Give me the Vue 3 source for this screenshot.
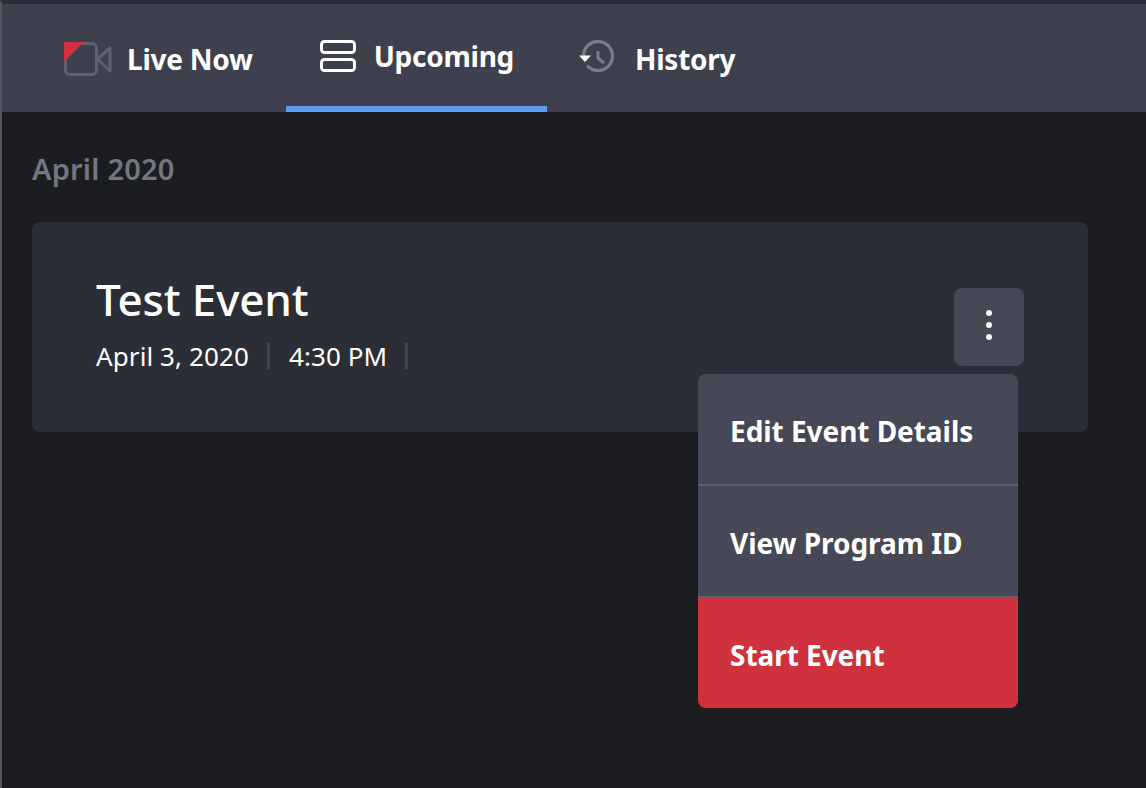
<template>
  <div class="page">
    <nav class="tabs">
      <a class="tab live">
        <svg class="tab-icon" width="48" height="34" viewBox="0 0 48 34" fill="none">
          <rect x="1.5" y="1.5" width="31" height="31" rx="4.5" stroke="#5f626e" stroke-width="3" />
          <path d="M33.5 17 L46 6 V29 Z" stroke="#5f626e" stroke-width="3" stroke-linejoin="round" />
          <path d="M0 0 H20 L0 20 Z" fill="#cf323c" />
        </svg>
        <span>Live Now</span>
      </a>
      <a class="tab active">
        <svg class="tab-icon" width="36" height="32" viewBox="0 0 36 32" fill="none">
          <rect x="1.5" y="1.5" width="33" height="11" rx="3" stroke="#fff" stroke-width="3" />
          <rect x="1.5" y="19.5" width="33" height="11" rx="3" stroke="#fff" stroke-width="3" />
        </svg>
        <span>Upcoming</span>
      </a>
      <a class="tab history">
        <svg class="tab-icon" width="36" height="32" viewBox="0 0 36 32" fill="none">
          <path d="M4.5 16 A14.5 14.5 0 1 1 9 26.5" stroke="#7b7d89" stroke-width="3.2" stroke-linecap="round" />
          <path d="M19 11 V18 L25 23" stroke="#7b7d89" stroke-width="3" stroke-linejoin="round" />
          <path d="M0 15.5 H12 L6 22 Z" fill="#fff" />
        </svg>
        <span>History</span>
      </a>
    </nav>

    <main class="content">
      <h2 class="month">{{ month }}</h2>
      <section class="event-card">
        <div class="event-info">
          <h1>{{ event.title }}</h1>
          <p class="meta">
            <span>{{ event.date }}</span>
            <i class="sep"></i>
            <span>{{ event.time }}</span>
            <i class="sep"></i>
          </p>
        </div>
        <button class="more" aria-label="More">
          <b></b><b></b><b></b>
        </button>
        <ul class="menu">
          <li v-for="item in menuItems" :key="item.label" :class="{ danger: item.danger }">
            {{ item.label }}
          </li>
        </ul>
      </section>
    </main>
  </div>
</template>

<script setup>
const month = 'April 2020'
const event = {
  title: 'Test Event',
  date: 'April 3, 2020',
  time: '4:30 PM'
}
const menuItems = [
  { label: 'Edit Event Details' },
  { label: 'View Program ID' },
  { label: 'Start Event', danger: true }
]
</script>

<style>
html,
body {
  background: #1c1d21;
}
</style>

<style scoped>
.page {
  height: 788px;
  box-sizing: border-box;
  border-left: 2px solid #55575f;
  border-top: 4px solid #2c2e36;
  background: #1c1d21;
  color: #fff;
  font-family: "Noto Sans", sans-serif;
  overflow: hidden;
}

.tabs {
  display: flex;
  height: 108px;
  padding-left: 30px;
  background: #3e414d;
}

.tab {
  display: flex;
  align-items: center;
  gap: 20px;
  padding: 2px 32px 0;
  box-sizing: border-box;
  font-size: 28px;
  font-weight: 700;
  letter-spacing: -0.25px;
}

.tab.live {
  gap: 15px;
  padding-right: 33px;
}

.tab.active {
  gap: 18px;
  padding: 2px 33px 0 34px;
  border-bottom: 6px solid #5e9bee;
}

.tab.history .tab-icon {
  margin-bottom: 6px;
}

.content {
  padding: 0 58px 0 30px;
}

.month {
  margin: 0 0 34px;
  padding-top: 38px;
  font-size: 29px;
  line-height: 38px;
  font-weight: 600;
  letter-spacing: 0.2px;
  color: #747682;
}

.event-card {
  position: relative;
  display: flex;
  justify-content: space-between;
  height: 210px;
  box-sizing: border-box;
  padding: 66px 64px 0;
  background: #2c2e37;
  border-radius: 8px;
}

.event-info h1 {
  margin: -18px 0 0;
  font-size: 44px;
  line-height: 58px;
  font-weight: 500;
  letter-spacing: -0.15px;
}

.meta {
  display: flex;
  align-items: center;
  margin: 10px 0 0;
  font-size: 26px;
  line-height: 36px;
  letter-spacing: 0.1px;
}

.sep {
  width: 3px;
  height: 26px;
  margin: 0 19px 0 18px;
  background: #41444f;
}

.more {
  display: flex;
  flex-direction: column;
  align-items: center;
  justify-content: center;
  gap: 6px;
  width: 70px;
  height: 78px;
  padding: 0 0 4px;
  border: 0;
  border-radius: 8px;
  background: #464855;
}

.more b {
  width: 6px;
  height: 6px;
  border-radius: 50%;
  background: #fff;
}

.menu {
  position: absolute;
  top: 152px;
  right: 70px;
  width: 320px;
  margin: 0;
  padding: 0;
  list-style: none;
  border-radius: 8px;
  overflow: hidden;
  background: #464855;
}

.menu li {
  height: 106px;
  padding: 4px 32px 0;
  display: flex;
  align-items: center;
  font-size: 28px;
  font-weight: 700;
  letter-spacing: -0.05px;
  border-bottom: 2px solid #5f616d;
}

.menu li.danger {
  background: #cf323c;
  border-bottom: 0;
}
</style>
